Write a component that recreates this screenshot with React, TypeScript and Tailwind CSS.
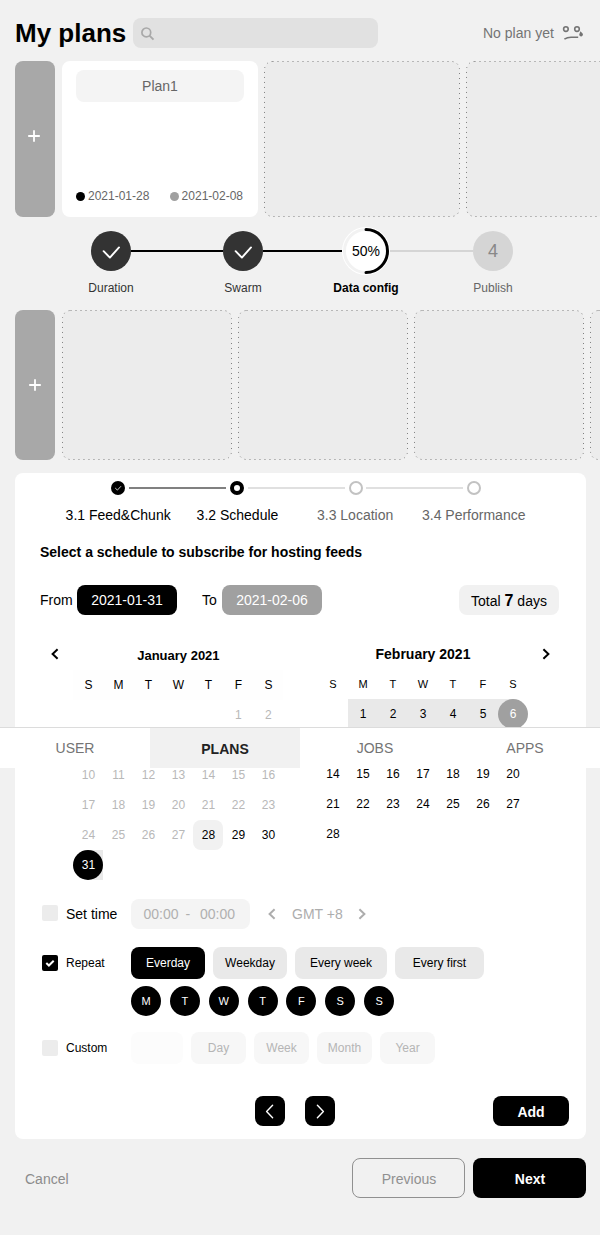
import type { ReactNode } from "react";

function EmptySlot({ w, h }: { w: number; h: number }) {
  return (
    <svg width={w} height={h} className="shrink-0">
      <rect x="0.5" y="0.5" width={w - 1} height={h - 1} rx="8" fill="#ececec" stroke="#808080" strokeDasharray="1 4" />
    </svg>
  );
}

function AddColumn({ iconClass }: { iconClass: string }) {
  return (
    <button className={`flex w-10 shrink-0 items-center justify-center rounded-lg bg-[#a8a8a8] ${iconClass}`}>
      <svg width="14" height="14" viewBox="0 0 14 14">
        <path d="M7 1.2v11.6M1.2 7h11.6" stroke="#fff" strokeWidth="1.8" />
      </svg>
    </button>
  );
}

function Tick() {
  return (
    <svg width="40" height="40" viewBox="0 0 40 40">
      <circle cx="20" cy="20" r="20" fill="#333" />
      <path d="M12.6 20.2l6.3 6.4 9.1-10.2" fill="none" stroke="#fff" strokeWidth="1.9" strokeLinecap="round" strokeLinejoin="round" />
    </svg>
  );
}

function Chevron({ right = false }: { right?: boolean }) {
  return (
    <svg width="8" height="12" viewBox="0 0 8 12">
      <path d={right ? "M1.4 1.2l5 4.8-5 4.8" : "M6.6 1.2l-5 4.8 5 4.8"} fill="none" stroke="currentColor" strokeWidth="2" />
    </svg>
  );
}

function ThinChevron({ right = false }: { right?: boolean }) {
  return (
    <svg width="30" height="30" viewBox="0 0 30 30">
      <path d={right ? "M12.4 9.3l6 6.2-6 6.2" : "M17.6 9.3l-6 6.2 6 6.2"} fill="none" stroke="#fff" strokeWidth="1.4" strokeLinecap="round" strokeLinejoin="round" />
    </svg>
  );
}

function Step({ width, label, labelClass, children }: { width: string; label: string; labelClass: string; children: ReactNode }) {
  return (
    <div className={`flex shrink-0 flex-col items-center ${width}`}>
      <div className="flex h-12 items-center justify-center">{children}</div>
      <div className={`mt-[5px] text-xs leading-4 whitespace-nowrap ${labelClass}`}>{label}</div>
    </div>
  );
}

const week = ["S", "M", "T", "W", "T", "F", "S"];

function January() {
  const blanks = [0, 1, 2, 3, 4];
  const days = Array.from({ length: 31 }, (_, i) => i + 1);
  return (
    <div className="grid grid-cols-[repeat(7,30px)] auto-rows-[30px] text-xs">
      {week.map((d, i) => (
        <div key={i} className="flex items-center justify-center bg-[#fefefe]">{d}</div>
      ))}
      {blanks.map((b) => <div key={`b${b}`} />)}
      {days.map((d) => {
        if (d > 2 && d < 10) return <div key={d} />;
        if (d === 31)
          return (
            <div key={d} className="bg-[linear-gradient(90deg,transparent_50%,#e9e9e9_50%)]">
              <div className="flex h-[30px] w-[30px] items-center justify-center rounded-full bg-black text-white">{d}</div>
            </div>
          );
        return (
          <div
            key={d}
            className={`flex items-center justify-center ${d < 28 ? "text-[#b8b8b8]" : "text-black"} ${d === 28 ? "rounded-lg bg-[#f1f1f1]" : ""}`}
          >
            {d}
          </div>
        );
      })}
    </div>
  );
}

function February() {
  const days = Array.from({ length: 28 }, (_, i) => i + 1);
  return (
    <div className="grid grid-cols-[repeat(7,30px)] auto-rows-[30px] text-xs">
      {week.map((d, i) => (
        <div key={i} className="flex items-center justify-center text-[11px]">{d}</div>
      ))}
      <div />
      {days.map((d) => {
        if (d > 6 && d < 14) return <div key={d} />;
        if (d === 6)
          return (
            <div key={d} className="bg-[linear-gradient(90deg,#e9e9e9_50%,transparent_50%)]">
              <div className="flex h-[30px] w-[30px] items-center justify-center rounded-full bg-[#a0a0a0] text-white">{d}</div>
            </div>
          );
        return (
          <div key={d} className={`flex items-center justify-center ${d < 6 ? "bg-[#e9e9e9]" : ""}`}>
            {d}
          </div>
        );
      })}
    </div>
  );
}

function SubDot({ state }: { state: "done" | "current" | "todo" }) {
  return (
    <svg width="14" height="14" viewBox="0 0 14 14" className="shrink-0">
      {state === "done" && (
        <>
          <circle cx="7" cy="7" r="7" fill="#000" />
          <path d="M4.2 7l2.2 2.1L10 5.2" fill="none" stroke="#ddd" strokeWidth="0.9" />
        </>
      )}
      {state === "current" && <circle cx="7" cy="7" r="5" fill="#fff" stroke="#000" strokeWidth="4" />}
      {state === "todo" && <circle cx="7" cy="7" r="6" fill="#fff" stroke="#c2c2c2" strokeWidth="2" />}
    </svg>
  );
}

const pill = "flex h-8 items-center justify-center rounded-lg text-xs";

export default function App() {
  return (
    <div className="relative flex h-[1235px] w-[600px] flex-col overflow-hidden bg-[#f1f1f1] font-['Liberation_Sans',Arial,sans-serif] text-black">
      <header className="mt-[18px] flex h-[30px] shrink-0 items-center pl-[15px]">
        <h1 className="w-[118px] shrink-0 text-[26px] leading-[30px] font-bold whitespace-nowrap">My plans</h1>
        <div className="flex h-[30px] w-[245px] items-center rounded-lg bg-[#e1e1e1] pl-[7px]">
          <svg width="15" height="15" viewBox="0 0 15 15">
            <circle cx="6.3" cy="6.4" r="4.4" fill="none" stroke="#a8a8a8" strokeWidth="1.7" />
            <path d="M9.5 9.6l4 4" stroke="#a8a8a8" strokeWidth="1.9" />
          </svg>
        </div>
        <div className="ml-[105px] text-sm whitespace-nowrap text-[#747474]">No plan yet</div>
        <svg width="22" height="16" viewBox="0 0 22 16" className="ml-[8px]">
          <g fill="none" stroke="#747474" strokeWidth="1.6">
            <circle cx="3.9" cy="4.1" r="2.3" />
            <circle cx="15" cy="4.1" r="2.3" />
            <path d="M2.4 14.2q3-2 7-1.9h6.8" />
          </g>
          <path d="M18.4 6.2l2.2 2.4a1.8 1.8 0 1 1-3.2.4z" fill="#747474" />
        </svg>
      </header>

      <section className="mt-[13px] flex h-[156px] shrink-0 pl-[15px]">
        <AddColumn iconClass="pr-[2px] pb-[6px]" />
        <div className="ml-[7px] flex w-[196px] shrink-0 flex-col justify-between rounded-lg bg-white px-[14px] pt-[9px] pb-[12px]">
          <div className="flex h-8 items-center justify-center rounded-lg bg-[#f4f4f4] text-sm text-[#666]">Plan1</div>
          <div className="flex items-center justify-between text-xs leading-[18px] text-[#666]">
            <span className="flex items-center gap-[3px]"><i className="h-[9px] w-[9px] rounded-full bg-black" />2021-01-28</span>
            <span className="mr-[1px] flex items-center gap-[3px]"><i className="h-[9px] w-[9px] rounded-full bg-[#a0a0a0]" />2021-02-08</span>
          </div>
        </div>
        <div className="ml-[6px] flex gap-[6px]">
          <EmptySlot w={196} h={156} />
          <EmptySlot w={196} h={156} />
        </div>
      </section>

      <section className="mt-[10px] flex h-[83px] shrink-0 items-start pl-[91px]">
        <Step width="w-10" label="Duration" labelClass="text-[#333]"><Tick /></Step>
        <div className="mt-[23px] h-[2px] w-[92px] bg-black" />
        <Step width="w-10" label="Swarm" labelClass="text-[#333]"><Tick /></Step>
        <div className="mt-[23px] h-[2px] w-[79px] bg-black" />
        <Step width="w-12" label="Data config" labelClass="font-bold">
          <div className="relative flex h-12 w-12 items-center justify-center">
            <svg width="48" height="48" viewBox="0 0 48 48" className="absolute inset-0">
              <circle cx="24" cy="24" r="24" fill="#fff" />
              <circle cx="24" cy="24" r="21.5" fill="none" stroke="#f2f2f2" strokeWidth="3" />
              <path d="M24 2.5a21.5 21.5 0 0 1 0 43" fill="none" stroke="#000" strokeWidth="3" strokeLinecap="round" />
            </svg>
            <span className="relative text-sm">50%</span>
          </div>
        </Step>
        <div className="mt-[23px] h-[2px] w-[83px] bg-[#d5d5d5]" />
        <Step width="w-10" label="Publish" labelClass="text-[#666]">
          <div className="flex h-10 w-10 items-center justify-center rounded-full bg-[#d5d5d5] text-lg text-[#888]">4</div>
        </Step>
      </section>

      <section className="flex h-[150px] shrink-0 pl-[15px]">
        <AddColumn iconClass="pr-[1px]" />
        <div className="ml-[7px] flex gap-[6px]">
          <EmptySlot w={170} h={150} />
          <EmptySlot w={170} h={150} />
          <EmptySlot w={170} h={150} />
          <EmptySlot w={170} h={150} />
        </div>
      </section>

      <main className="mt-[13px] ml-[15px] flex h-[666px] w-[571px] shrink-0 flex-col rounded-lg bg-white">
        <div className="mt-2 flex h-[14px] items-center pl-[96px]">
          <SubDot state="done" />
          <i className="mr-[4px] ml-[4px] h-[2px] w-[97px] bg-[#808080]" />
          <SubDot state="current" />
          <i className="mr-[4px] ml-[4px] h-[2px] w-[97px] bg-[#e0e0e0]" />
          <SubDot state="todo" />
          <i className="mr-[4px] ml-[3px] h-[2px] w-[97px] bg-[#e0e0e0]" />
          <SubDot state="todo" />
        </div>
        <div className="mt-[10px] flex pl-[50.6px] text-sm leading-5 whitespace-nowrap">
          <span className="w-[131px]">3.1 Feed&amp;Chunk</span>
          <span className="w-[120.4px]">3.2 Schedule</span>
          <span className="w-[105px] text-[#666]">3.3 Location</span>
          <span className="text-[#666]">3.4 Performance</span>
        </div>
        <h2 className="mt-[17px] pl-[25px] text-sm leading-5 font-bold">Select a schedule to subscribe for hosting feeds</h2>

        <div className="mt-[23px] flex h-[30px] items-center pl-[25px] text-sm">
          <span className="w-[37px]">From</span>
          <div className="flex h-[30px] w-[100px] items-center justify-center rounded-lg bg-black text-white">2021-01-31</div>
          <span className="ml-[25px] w-[20px]">To</span>
          <div className="flex h-[30px] w-[100px] items-center justify-center rounded-lg bg-[#a0a0a0] text-white">2021-02-06</div>
          <div className="ml-[137px] flex h-[30px] w-[100px] items-center justify-center rounded-lg bg-[#f1f1f1] pt-[1px]">
            <span className="whitespace-pre">Total <b className="text-base leading-4">7</b> days</span>
          </div>
        </div>

        <div className="mt-[25px] flex h-[245px] pl-[36px]">
          <div className="mt-[8px] w-[22.4px]"><Chevron /></div>
          <div className="w-[210px]">
            <div className="h-[30px] pt-[1px] text-center text-[13px] leading-[30px] font-bold">January 2021</div>
            <January />
          </div>
          <div className="ml-[34.6px] w-[210px]">
            <div className="h-[29px] text-center text-sm leading-[28px] font-bold">February 2021</div>
            <February />
          </div>
          <div className="mt-[8px] ml-[14px]"><Chevron right /></div>
        </div>

        <div className="mt-[14px] flex h-[30px] items-center pl-[27px] text-sm">
          <i className="mb-[2px] h-4 w-4 rounded-[2px] bg-[#ececec]" />
          <span className="ml-2 w-[65px]">Set time</span>
          <div className="flex h-[30px] w-[119px] items-center rounded-lg bg-[#f4f4f4] pl-[12.5px] whitespace-pre text-[#b0b0b0]">
            <span className="w-[42px]">00:00</span>
            <span className="w-[14.5px]">-</span>
            <span>00:00</span>
          </div>
          <div className="ml-[18px] flex items-center text-[#adadad]">
            <Chevron />
            <span className="mr-[15px] ml-[16px]">GMT +8</span>
            <Chevron right />
          </div>
        </div>

        <div className="mt-[18px] flex h-8 items-center pl-[27px] text-xs">
          <svg width="16" height="16" viewBox="0 0 16 16">
            <rect width="16" height="16" rx="2" fill="#000" />
            <path d="M4.3 8l2.6 2.5 4.8-4.7" fill="none" stroke="#fff" strokeWidth="2" />
          </svg>
          <span className="ml-2 w-[65px]">Repeat</span>
          <div className="flex gap-2">
            <div className={`${pill} w-[74px] bg-black text-white`}>Everday</div>
            <div className={`${pill} w-[74px] bg-[#e9e9e9]`}>Weekday</div>
            <div className={`${pill} w-[92px] bg-[#e9e9e9]`}>Every week</div>
            <div className={`${pill} w-[89px] bg-[#e9e9e9]`}>Every first</div>
          </div>
        </div>
        <div className="mt-[7px] flex gap-[8.85px] pl-[116px] text-[11px] text-white">
          {["M", "T", "W", "T", "F", "S", "S"].map((d, i) => (
            <div key={i} className="flex h-[30px] w-[30px] items-center justify-center rounded-full bg-black">{d}</div>
          ))}
        </div>

        <div className="mt-4 flex h-8 items-center pl-[27px] text-xs">
          <i className="h-4 w-4 rounded-[2px] bg-[#ececec]" />
          <span className="ml-2 w-[65px]">Custom</span>
          <div className="flex gap-2 text-[#b5b5b5]">
            <div className={`${pill} w-[52px] bg-[#fcfcfc]`} />
            <div className={`${pill} w-[55px] bg-[#f7f7f7]`}>Day</div>
            <div className={`${pill} w-[55px] bg-[#f7f7f7]`}>Week</div>
            <div className={`${pill} w-[55px] bg-[#f7f7f7]`}>Month</div>
            <div className={`${pill} w-[55px] bg-[#f7f7f7]`}>Year</div>
          </div>
        </div>

        <div className="mt-8 flex h-[30px] items-center pl-[240px]">
          <button className="rounded-lg bg-black"><ThinChevron /></button>
          <button className="ml-5 rounded-lg bg-black"><ThinChevron right /></button>
          <button className="ml-[158px] h-[30px] w-[76px] rounded-lg bg-black pt-[2px] text-sm font-bold text-white">Add</button>
        </div>
      </main>

      <footer className="mt-[19px] flex h-10 shrink-0 items-center pl-[25px] text-sm">
        <button className="mt-[2px] w-[327px] text-left text-[#8c8c8c]">Cancel</button>
        <button className="h-10 w-[113px] rounded-lg border border-[#909090] pt-[2px] pl-[1px] text-[#909090]">Previous</button>
        <button className="ml-2 h-10 w-[113px] rounded-lg bg-black pt-[2px] pl-[1px] font-bold text-white">Next</button>
      </footer>

      <nav className="absolute top-[727px] left-0 grid h-[41px] w-[600px] grid-cols-4 border-t border-[#dcdcdc] bg-white text-center text-sm leading-10 text-[#747474]">
        <div>USER</div>
        <div className="h-10 overflow-hidden bg-[#f1f1f1] pt-[1px] font-bold text-[#222]">PLANS</div>
        <div>JOBS</div>
        <div>APPS</div>
      </nav>
    </div>
  );
}
